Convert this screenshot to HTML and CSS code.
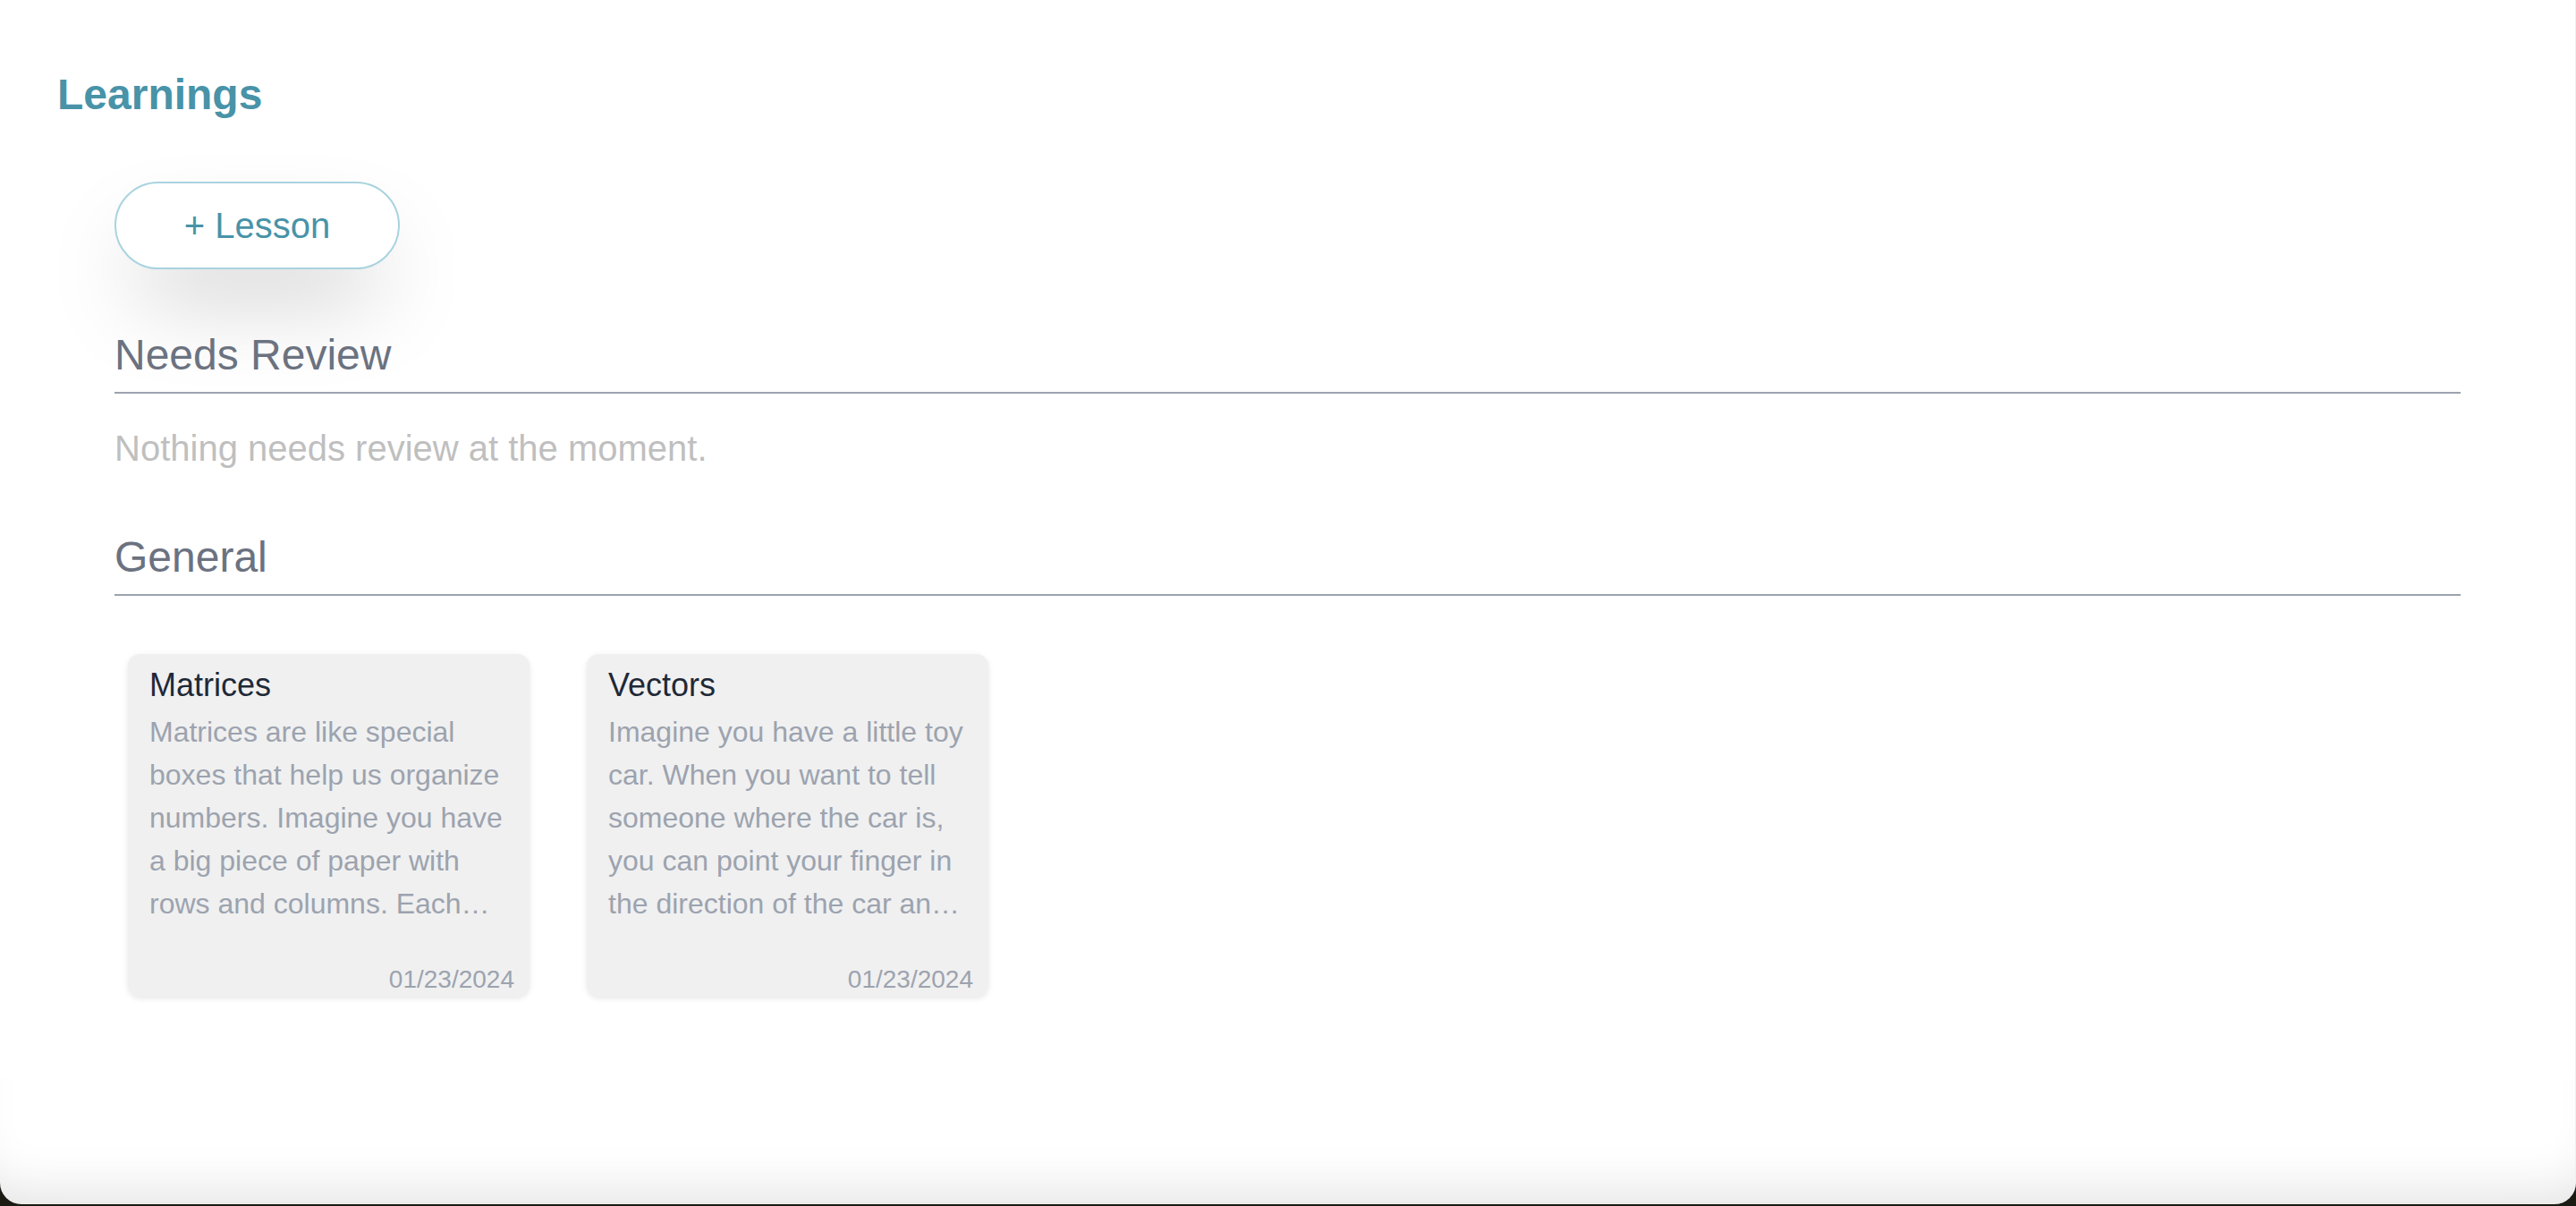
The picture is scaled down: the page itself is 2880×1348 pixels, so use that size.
FILE: index.html
```html
<!DOCTYPE html>
<html lang="en">
<head>
<meta charset="utf-8">
<title>Learnings</title>
<link rel="stylesheet" href="styles.css">
</head>
<body>
<div class="window">
  <h1 class="page-title">Learnings</h1>
  <main class="content">
    <div class="actions">
      <button class="add-btn">+ Lesson</button>
    </div>
    <section class="section">
      <h2 class="section-title">Needs Review</h2>
      <p class="empty">Nothing needs review at the moment.</p>
    </section>
    <section class="section">
      <h2 class="section-title">General</h2>
      <div class="cards">
        <article class="card">
          <h3 class="card-title">Matrices</h3>
          <p class="card-body">Matrices are like special boxes that help us organize numbers. Imagine you have a big piece of paper with rows and columns. Each…</p>
          <div class="card-date">01/23/2024</div>
        </article>
        <article class="card">
          <h3 class="card-title">Vectors</h3>
          <p class="card-body">Imagine you have a little toy car. When you want to tell someone where the car is, you can point your finger in the direction of the car an…</p>
          <div class="card-date">01/23/2024</div>
        </article>
      </div>
    </section>
  </main>
</div>
</body>
</html>
```
FILE: styles.css
```css
html {
  background: #1c1a12;
}
body {
  margin: 0;
  font-family: "Liberation Sans", Arial, Helvetica, sans-serif;
}
.window {
  position: relative;
  height: 1346px;
  background: #ffffff;
  border-radius: 0 0 24px 24px;
  overflow: hidden;
  box-sizing: border-box;
  padding-top: 74px;
  border-right: 1px solid #f0f0f0;
}
.window::after {
  content: "";
  position: absolute;
  left: 0;
  right: 0;
  bottom: 0;
  height: 140px;
  pointer-events: none;
  border-radius: 0 0 24px 24px;
  box-shadow: inset 0 -50px 60px -40px rgba(0, 0, 0, 0.12);
}
.page-title {
  margin: 0 0 0 64px;
  font-size: 48px;
  line-height: 64px;
  font-weight: 700;
  color: #4893a8;
}
.content {
  margin: 0 128px;
}
.actions {
  margin-top: 65px;
  display: flex;
}
.add-btn {
  box-sizing: border-box;
  height: 98px;
  width: 319px;
  border: 2px solid #a9d3df;
  border-radius: 49px;
  background: #fff;
  color: #4893a8;
  font-family: inherit;
  font-size: 40px;
  line-height: 48px;
  padding: 0;
  box-shadow: 0 50px 100px -24px rgba(0, 0, 0, 0.25);
}
.section {
  display: flex;
  flex-direction: column;
}
.section-title {
  margin: 0;
  font-size: 48px;
  line-height: 64px;
  font-weight: 400;
  color: #6b7280;
  padding-bottom: 9px;
  border-bottom: 2px solid #9ca3af;
}
.actions + .section .section-title {
  margin-top: 64px;
}
.empty {
  margin: 33px 0 0;
  font-size: 40px;
  line-height: 56px;
  color: #bfbfbf;
}
.section + .section {
  margin-top: 62px;
}
.cards {
  display: flex;
  gap: 64px;
  padding-left: 15px;
  margin-top: 65px;
}
.card {
  box-sizing: border-box;
  width: 449px;
  height: 383px;
  background: #f0f0f0;
  border-radius: 14px;
  box-shadow: 0 2px 6px rgba(0, 0, 0, 0.1);
  display: flex;
  flex-direction: column;
  padding: 7px 0 0;
}
.card-title {
  margin: 0;
  padding: 0 24px;
  font-size: 36px;
  line-height: 56px;
  font-weight: 400;
  color: #1f2937;
}
.card-body {
  margin: 0;
  padding: 0 24px;
  font-size: 32px;
  line-height: 48px;
  color: #9ca3af;
}
.card-date {
  margin-top: auto;
  padding: 0 17px 0 0;
  text-align: right;
  font-size: 28px;
  line-height: 38px;
  color: #9ca3af;
}
```
